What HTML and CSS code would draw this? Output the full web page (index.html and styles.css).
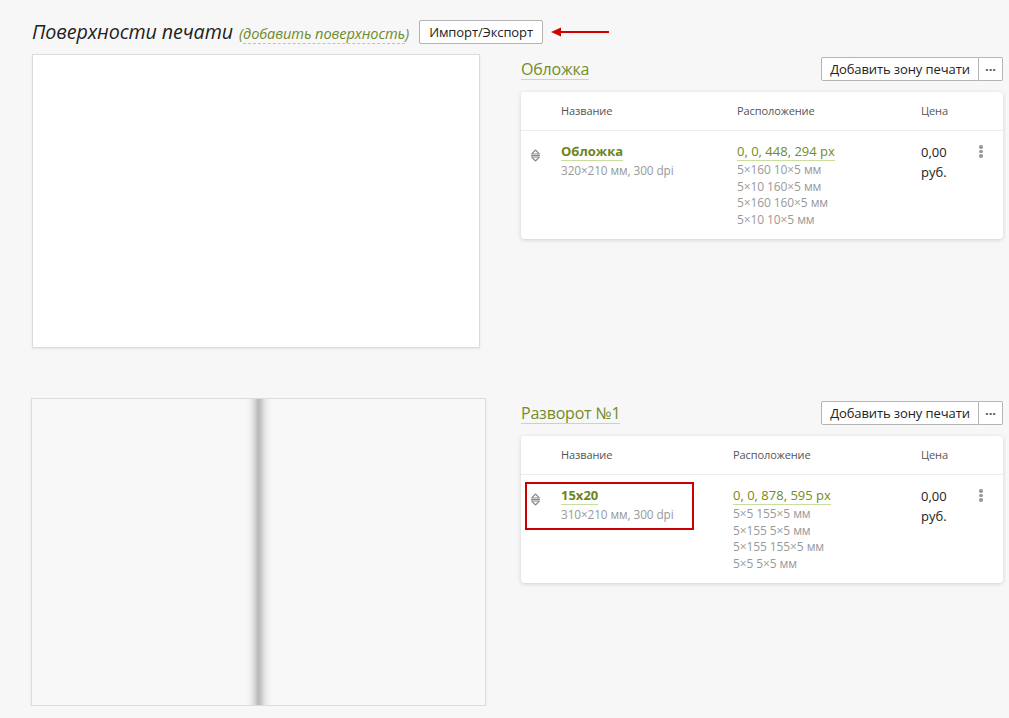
FILE: index.html
```html
<!DOCTYPE html>
<html lang="ru">
<head>
<meta charset="utf-8">
<title>Поверхности печати</title>
<link rel="stylesheet" href="styles.css">
</head>
<body>
<div class="page">
  <div class="title-row">
    <h1 class="title">Поверхности печати</h1>
    <span class="add-link">(<span class="dashed">добавить поверхность</span>)</span>
    <button class="btn btn-import">Импорт/Экспорт</button>
    <svg class="red-arrow" width="58" height="10" viewBox="0 0 58 10"><path d="M0 5 L10 0.5 L10 9.5 Z" fill="#d00000"/><rect x="9" y="4" width="49" height="2" fill="#d00000"/></svg>
  </div>

  <section class="surface">
    <div class="preview-col">
      <div class="preview preview-cover"></div>
    </div>
    <div class="info-col">
      <div class="info-head">
        <span class="surface-name">Обложка</span>
        <div class="btn-group">
          <button class="btn btn-add">Добавить зону печати</button><button class="btn btn-more">···</button>
        </div>
      </div>
      <div class="card">
        <div class="grid grid-head">
          <span></span>
          <span>Название</span>
          <span>Расположение</span>
          <span>Цена</span>
          <span></span>
        </div>
        <div class="grid grid-row">
          <div class="cell-icon">
            <svg width="11" height="13" viewBox="0 0 11 13"><path d="M5.5 1 L9.3 5 L1.7 5 Z" fill="none" stroke="#8c8c8c" stroke-width="1.1" stroke-linejoin="round"/><rect x="1" y="6" width="9" height="1.1" fill="#8c8c8c"/><path d="M1.7 8 L9.3 8 L5.5 12 Z" fill="none" stroke="#8c8c8c" stroke-width="1.1" stroke-linejoin="round"/></svg>
          </div>
          <div class="cell-name">
            <span class="zone-name">Обложка</span>
            <div class="muted">320×210 мм, 300 dpi</div>
          </div>
          <div class="cell-pos">
            <span class="pos-link">0, 0, 448, 294 px</span>
            <div class="pos-lines">
              <div>5×160 10×5 мм</div>
              <div>5×10 160×5 мм</div>
              <div>5×160 160×5 мм</div>
              <div>5×10 10×5 мм</div>
            </div>
          </div>
          <div class="cell-price">0,00<br>руб.</div>
          <div class="cell-menu"><span class="dots"><i></i><i></i><i></i></span></div>
        </div>
      </div>
    </div>
  </section>

  <section class="surface">
    <div class="preview-col">
      <div class="preview preview-spread"></div>
    </div>
    <div class="info-col">
      <div class="info-head">
        <span class="surface-name">Разворот №1</span>
        <div class="btn-group">
          <button class="btn btn-add">Добавить зону печати</button><button class="btn btn-more">···</button>
        </div>
      </div>
      <div class="card">
        <div class="grid grid-spread grid-head">
          <span></span>
          <span>Название</span>
          <span>Расположение</span>
          <span>Цена</span>
          <span></span>
        </div>
        <div class="grid grid-spread grid-row">
          <div class="highlight"></div>
          <div class="cell-icon">
            <svg width="11" height="13" viewBox="0 0 11 13"><path d="M5.5 1 L9.3 5 L1.7 5 Z" fill="none" stroke="#8c8c8c" stroke-width="1.1" stroke-linejoin="round"/><rect x="1" y="6" width="9" height="1.1" fill="#8c8c8c"/><path d="M1.7 8 L9.3 8 L5.5 12 Z" fill="none" stroke="#8c8c8c" stroke-width="1.1" stroke-linejoin="round"/></svg>
          </div>
          <div class="cell-name">
            <span class="zone-name">15x20</span>
            <div class="muted">310×210 мм, 300 dpi</div>
          </div>
          <div class="cell-pos">
            <span class="pos-link">0, 0, 878, 595 px</span>
            <div class="pos-lines">
              <div>5×5 155×5 мм</div>
              <div>5×155 5×5 мм</div>
              <div>5×155 155×5 мм</div>
              <div>5×5 5×5 мм</div>
            </div>
          </div>
          <div class="cell-price">0,00<br>руб.</div>
          <div class="cell-menu"><span class="dots"><i></i><i></i><i></i></span></div>
        </div>
      </div>
    </div>
  </section>
</div>
</body>
</html>
```

FILE: styles.css
```css
* { box-sizing: border-box; }
html, body {
  margin: 0;
  padding: 0;
  background: #f7f7f7;
  font-family: "Open Sans", "Noto Sans", sans-serif;
  color: #222;
}
.page {
  padding: 20px 6px 0 32px;
}
.title-row {
  display: flex;
  align-items: center;
  height: 24px;
}
.title {
  margin: 0;
  font-size: 19.7px;
  font-weight: 400;
  font-style: italic;
  color: #222;
  line-height: 24px;
  letter-spacing: -0.1px;
}
.add-link {
  margin-left: 6px;
  margin-top: 2px;
  font-style: italic;
  font-size: 14.6px;
  color: #6f8a2a;
  letter-spacing: -0.1px;
}
.add-link .dashed {
  border-bottom: 1px dashed #b8d08c;
}
.btn {
  font-family: "Open Sans", "Noto Sans", sans-serif;
  font-size: 13px;
  color: #222;
  background: #fff;
  border: 1px solid #b4b4b4;
  border-radius: 2px;
  height: 24px;
  padding: 0 7px;
  line-height: 22px;
  cursor: pointer;
}
.btn-import {
  margin-left: 10px;
  width: 124px;
  padding: 0;
  letter-spacing: -0.1px;
}
.red-arrow {
  margin-left: 8px;
}
.surface {
  display: flex;
  margin-top: 10px;
  margin-bottom: 50px;
}
.surface + .surface {
  margin-top: 0;
  margin-bottom: 0;
}
.preview-col {
  width: 489px;
  flex: none;
}
.preview {
  border: 1px solid #dcdcdc;
  box-shadow: 0 1px 2px rgba(0,0,0,0.08);
}
.preview-cover {
  width: 448px;
  height: 294px;
  background: #fff;
}
.preview-spread {
  margin-left: -1px;
  width: 455px;
  height: 308px;
  background:
    linear-gradient(to right,
      rgba(0,0,0,0) 0,
      rgba(0,0,0,0.03) 4px,
      rgba(0,0,0,0.12) 8px,
      rgba(0,0,0,0.22) 11px,
      rgba(0,0,0,0.25) 13px,
      rgba(0,0,0,0.2) 15px,
      rgba(0,0,0,0.1) 18px,
      rgba(0,0,0,0.03) 22px,
      rgba(0,0,0,0) 26px) no-repeat 214px 0 / 26px 100%,
    #f8f8f8;
}
.info-col {
  flex: 1;
  padding-top: 3px;
}
.info-head {
  display: flex;
  justify-content: space-between;
  align-items: center;
  height: 24px;
}
.surface-name {
  font-size: 16px;
  color: #758b2b;
  line-height: 20px;
  border-bottom: 1px solid #c5de98;
  letter-spacing: -0.2px;
}
.btn-group {
  display: flex;
}
.btn-add {
  width: 158px;
  padding: 0;
  border-radius: 2px 0 0 2px;
  letter-spacing: -0.1px;
}
.btn-more {
  width: 24px;
  padding: 0;
  border-left: none;
  border-radius: 0 2px 2px 0;
  font-size: 13px;
  font-weight: 700;
  letter-spacing: 0;
  color: #555;
}
.card {
  margin-top: 11px;
  background: #fff;
  border-radius: 4px;
  box-shadow: 0 1px 4px rgba(0,0,0,0.16);
}
.grid {
  display: grid;
  grid-template-columns: 40px 176px 184px 1fr 33px;
  position: relative;
}
.grid-spread {
  grid-template-columns: 40px 172px 188px 1fr 33px;
}
.grid-head {
  height: 39px;
  padding-bottom: 2px;
  align-items: center;
  border-bottom: 1px solid #ececec;
  font-size: 11px;
  color: #555;
  letter-spacing: -0.1px;
}
.grid-row {
  padding: 8px 0 11px;
}
.cell-icon {
  padding-left: 9px;
  padding-top: 10px;
}
.cell-icon svg {
  display: block;
}
.zone-name {
  display: inline-block;
  font-size: 13px;
  font-weight: 700;
  color: #6d8420;
  line-height: 18px;
  border-bottom: 1px solid #c9de9e;
}
.muted {
  font-size: 11.8px;
  color: #999;
  line-height: 16px;
  margin-top: 1px;
  letter-spacing: -0.1px;
}
.pos-link {
  display: inline-block;
  font-size: 13px;
  color: #738b22;
  line-height: 18px;
  border-bottom: 1px solid #c9de9e;
}
.pos-lines {
  margin-top: 1px;
  font-size: 12px;
  color: #999;
  line-height: 16.6px;
  letter-spacing: -0.1px;
}
.cell-price {
  padding-top: 3px;
  font-size: 13px;
  line-height: 20px;
  color: #222;
}
.cell-menu {
  padding-left: 9px;
  padding-top: 6px;
}
.dots {
  display: flex;
  flex-direction: column;
  gap: 1px;
}
.dots i {
  display: block;
  width: 3.5px;
  height: 3.5px;
  border-radius: 50%;
  background: #9a9a9a;
}
.highlight {
  position: absolute;
  left: 4px;
  top: 7px;
  width: 169px;
  height: 48px;
  border: 2px solid #cc0000;
  pointer-events: none;
}
```
